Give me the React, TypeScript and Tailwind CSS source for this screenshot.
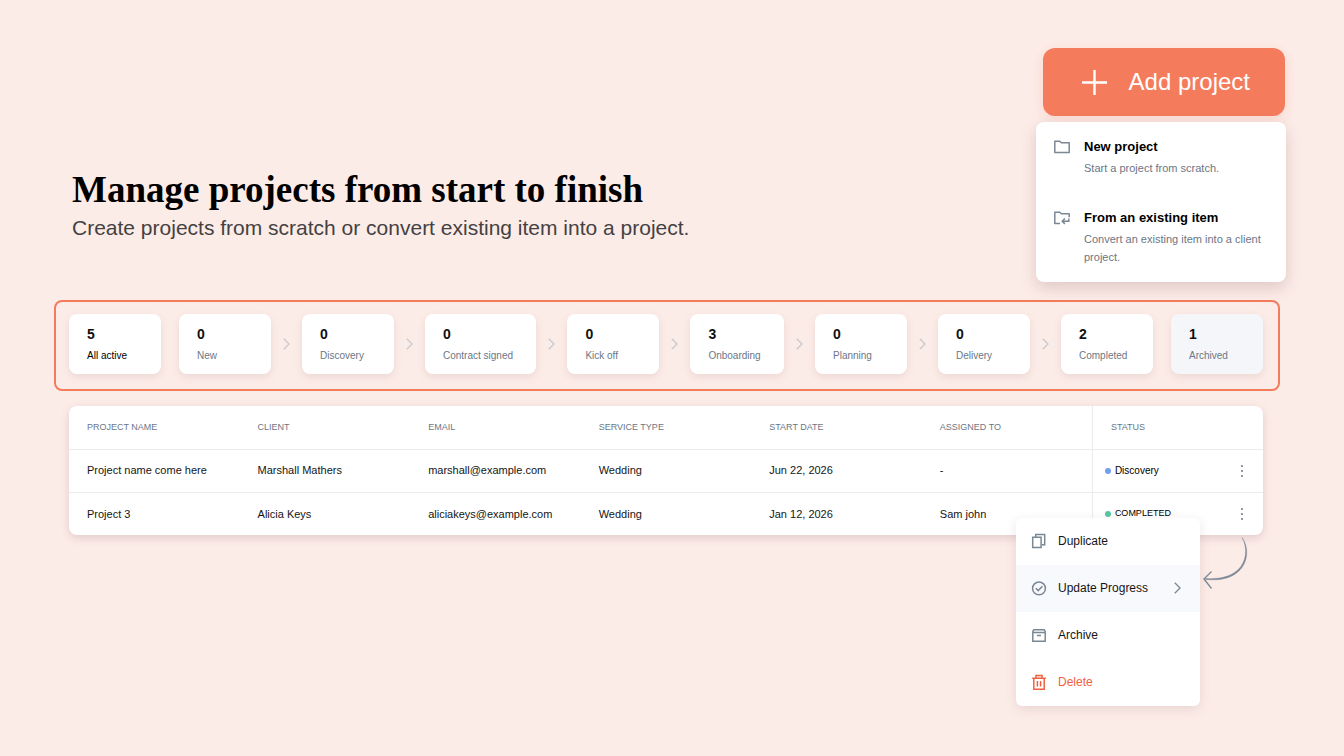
import type { ReactNode } from "react";

type Stage = { count: number; label: string; arrow?: boolean; tone?: "active" | "archived" };

const stages: Stage[] = [
  { count: 5, label: "All active", tone: "active" },
  { count: 0, label: "New", arrow: true },
  { count: 0, label: "Discovery", arrow: true },
  { count: 0, label: "Contract signed", arrow: true },
  { count: 0, label: "Kick off", arrow: true },
  { count: 3, label: "Onboarding", arrow: true },
  { count: 0, label: "Planning", arrow: true },
  { count: 0, label: "Delivery", arrow: true },
  { count: 2, label: "Completed" },
  { count: 1, label: "Archived", tone: "archived" },
];

const columns = ["Project name", "Client", "Email", "Service type", "Start date", "Assigned to"];

const projects = [
  {
    cells: ["Project name come here", "Marshall Mathers", "marshall@example.com", "Wedding", "Jun 22, 2026", "-"],
    status: "Discovery",
    dot: "bg-[#739ff0]",
    statusText: "text-[10px]",
  },
  {
    cells: ["Project 3", "Alicia Keys", "aliciakeys@example.com", "Wedding", "Jan 12, 2026", "Sam john"],
    status: "COMPLETED",
    dot: "bg-[#56c7a0]",
    statusText: "text-[9px]",
  },
];

// Shared wrapper for the line icons
function Icon({ children, className = "" }: { children: ReactNode; className?: string }) {
  return (
    <svg
      viewBox="0 0 16 16"
      className={`size-4 shrink-0 ${className}`}
      fill="none"
      stroke="currentColor"
      strokeWidth="1.5"
      aria-hidden="true"
    >
      {children}
    </svg>
  );
}

function Chevron({ className }: { className: string }) {
  return (
    <svg viewBox="0 0 7 12" className={className} fill="none" stroke="currentColor" strokeWidth="1.3" aria-hidden="true">
      <path d="M.8 .8L6 6 .8 11.2" />
    </svg>
  );
}

function StageCard({ stage }: { stage: Stage }) {
  return (
    <button
      className={`grow min-w-[92px] h-[60px] rounded-lg pl-[18px] pr-5 text-left shadow-[0_3px_8px_rgba(90,40,50,0.1)] ${
        stage.tone === "archived" ? "bg-[#f5f6f9]" : "bg-white"
      }`}
    >
      <span className="block text-sm leading-5 font-bold text-[#101010]">{stage.count}</span>
      <span
        className={`block mt-1 text-[10px] leading-4 whitespace-nowrap ${
          stage.tone === "active" ? "text-black" : "text-[#6b7686]"
        }`}
      >
        {stage.label}
      </span>
    </button>
  );
}

// Option in the dropdown below "Add project"
function AddOption({ icon, title, text }: { icon: ReactNode; title: string; text: string }) {
  return (
    <button className="flex items-start gap-3.5 text-left">
      <span className="pt-px text-[#7b8794]">{icon}</span>
      <span>
        <span className="block text-[13px] leading-[18px] font-bold text-black">{title}</span>
        <span className="block mt-[3px] text-[11px] leading-[18px] text-[#6b7686]">{text}</span>
      </span>
    </button>
  );
}

function MenuItem({ icon, label, className = "" }: { icon: ReactNode; label: string; className?: string }) {
  return (
    <button className={`flex h-[47px] w-full items-center gap-[11px] px-[15px] pb-0.5 text-left text-xs ${className}`}>
      {icon}
      <span className="grow">{label}</span>
      {label === "Update Progress" && <Chevron className="h-3 w-[7px] mr-1 text-[#7b8794]" />}
    </button>
  );
}

export default function App() {
  return (
    <main className="min-h-screen bg-[#fcece8] pt-12 pb-12 pl-[54px] pr-[58px] font-['Liberation_Sans',Arial,sans-serif] text-[#151515]">
      <header className="flex items-start justify-between">
        <div className="pl-[18px] pt-[118px]">
          <h1 className="font-['Liberation_Serif',serif] text-[37px] leading-[48px] font-bold text-black">
            Manage projects from start to finish
          </h1>
          <p className="text-[21px] leading-7 text-[#444142]">
            Create projects from scratch or convert existing item into a project.
          </p>
        </div>

        {/* Add project button with its open dropdown */}
        <div className="flex w-[250px] shrink-0 flex-col items-end">
          <button className="mr-px flex h-[68px] items-center gap-[22px] rounded-xl bg-[#f47c5d] pl-[39px] pr-[35px] text-2xl text-white shadow-[0_3px_14px_rgba(244,124,93,0.2)]">
            <svg viewBox="0 0 25 25" className="size-[25px]" stroke="currentColor" strokeWidth="2.4" aria-hidden="true">
              <path d="M12.5 0v25M0 12.5h25" />
            </svg>
            Add project
          </button>
          <div className="mt-1.5 flex w-full flex-col gap-8 rounded-lg bg-white py-4 pl-[18px] pr-4 shadow-[0_6px_16px_rgba(90,40,50,0.18)]">
            <AddOption
              title="New project"
              text="Start a project from scratch."
              icon={
                <Icon>
                  <path d="M.8 2.2h5l1.6 1.6h7.8v9.6H.8z" strokeLinejoin="round" />
                </Icon>
              }
            />
            <AddOption
              title="From an existing item"
              text="Convert an existing item into a client project."
              icon={
                <Icon>
                  <path d="M6 13.4H.8V2.2h5l1.6 1.6h7.8v3.4" strokeLinejoin="round" />
                  <path d="M14.8 8.6v2.6H8.4M10.9 8.5l-2.7 2.7 2.7 2.7" />
                </Icon>
              }
            />
          </div>
        </div>
      </header>

      {/* Pipeline stages */}
      <section className="mt-[18px] mr-1.5 flex items-center rounded-lg border-2 border-[#f47c5d] pt-3 pb-[15px] pl-[13px] pr-[15px]">
        {stages.map((stage, i) => (
          <div key={stage.label} className="contents">
            <StageCard stage={stage} />
            {stage.arrow && (
              <span className="flex w-[31px] shrink-0 justify-center text-[#c6c8d0]">
                <Chevron className="h-3 w-[7px]" />
              </span>
            )}
            {!stage.arrow && i < stages.length - 1 && <span className="w-[18px] shrink-0" />}
          </div>
        ))}
      </section>

      <section className="relative mt-[15px] ml-[15px] mr-[23px]">
        <div className="overflow-hidden rounded-lg bg-white shadow-[0_3px_10px_rgba(90,40,50,0.16)]">
          <table className="w-full table-fixed text-left">
            <thead>
              <tr className="h-[43px] text-[9px] text-[#6b7686] uppercase">
                {columns.map((name) => (
                  <th key={name} className="pl-[18px] font-normal">
                    {name}
                  </th>
                ))}
                <th className="border-l border-[#ebebed] pl-[18px] font-normal">Status</th>
              </tr>
            </thead>
            <tbody>
              {projects.map((project) => (
                <tr key={project.status} className="h-[43px] border-t border-[#ebebed] text-[11px]">
                  {project.cells.map((cell, i) => (
                    <td key={i} className="pl-[18px] whitespace-nowrap">
                      {cell}
                    </td>
                  ))}
                  <td className="border-l border-[#ebebed] pl-3 pr-[15px]">
                    <div className="flex items-center">
                      <span className={`size-1.5 rounded-full ${project.dot}`} />
                      <span className={`ml-1 grow text-black ${project.statusText}`}>{project.status}</span>
                      <button aria-label="Project actions" className="flex w-3 justify-center text-[#6b7686]">
                        <svg viewBox="0 0 4 14" className="h-3.5 w-1" fill="currentColor" aria-hidden="true">
                          <circle cx="2" cy="2" r="1" />
                          <circle cx="2" cy="7" r="1" />
                          <circle cx="2" cy="12" r="1" />
                        </svg>
                      </button>
                    </div>
                  </td>
                </tr>
              ))}
            </tbody>
          </table>
        </div>

        {/* Open row menu */}
        <div className="absolute top-[112px] right-[63px] w-[184px] overflow-hidden rounded-md bg-white shadow-[0_3px_12px_rgba(90,40,50,0.12)]">
          <MenuItem
            label="Duplicate"
            icon={
              <Icon className="text-[#7b8794]">
                <path d="M1.7 4.2h8.4v10.4H1.7z" />
                <path d="M4.7 4V1.6h9v10.2h-3.2" />
              </Icon>
            }
          />
          <MenuItem
            label="Update Progress"
            className="bg-[#f8f9fc]"
            icon={
              <Icon className="text-[#7b8794]">
                <circle cx="8" cy="8.4" r="6.4" />
                <path d="M4.8 8.2l2.4 2.4 4.2-4.4" />
              </Icon>
            }
          />
          <MenuItem
            label="Archive"
            icon={
              <Icon className="text-[#7b8794]">
                <path d="M1.8 5.6h12.4v8.6H1.8zM1.8 5.6V4.4l1-1.7h10.4l1 1.7v1.2M6 8.6h4" />
              </Icon>
            }
          />
          <MenuItem
            label="Delete"
            className="text-[#f0623f]"
            icon={
              <Icon>
                <path d="M1.2 4.2h13.6M5 4V1.6h6V4M2.8 4.4v10.8h10.4V4.4M6.4 7v5.4M9.6 7v5.4" />
              </Icon>
            }
          />
        </div>

        {/* Hand-drawn arrow from the row button to its menu */}
        <svg
          viewBox="0 0 46 54"
          className="absolute top-[131px] right-[14px] h-[54px] w-[46px] text-[#7b8794]"
          fill="none"
          stroke="currentColor"
          aria-hidden="true"
        >
          <path
            d="M39 .5C46 10 45.5 25 36 34C27 42.5 14 43.8 1 42.3V41.5C14 42.2 26 40.8 34.8 33C43.5 25 45 11 39 .5z"
            fill="currentColor"
            strokeWidth="0.4"
          />
          <path d="M8.5 34.5L1 42l7.5 9.5" strokeWidth="1.3" />
        </svg>
      </section>
    </main>
  );
}
